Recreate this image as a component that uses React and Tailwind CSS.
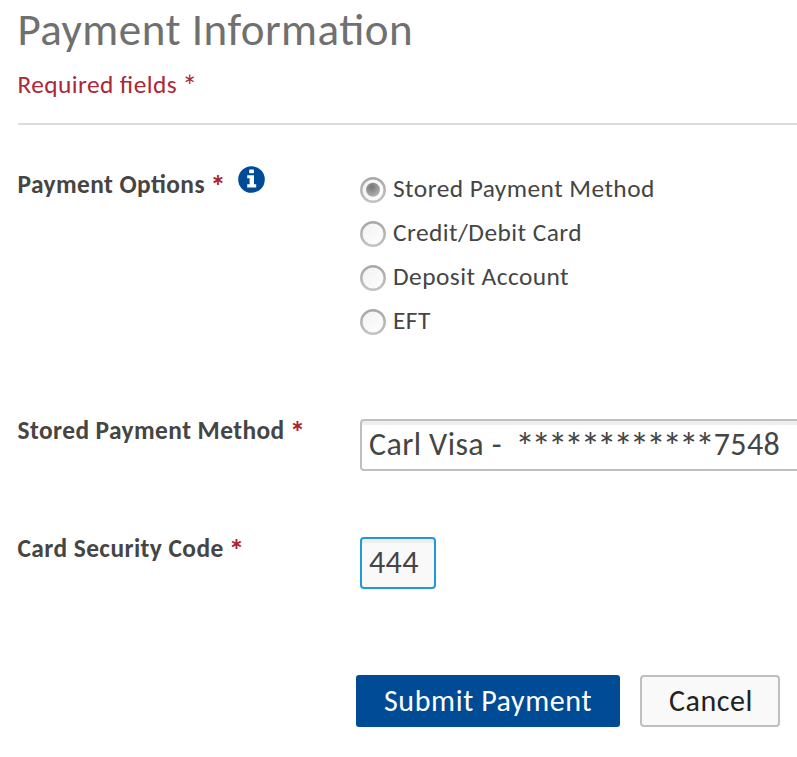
import { useState } from "react";

const options = [
  { id: "stored", label: "Stored Payment Method" },
  { id: "card", label: "Credit/Debit Card" },
  { id: "deposit", label: "Deposit Account" },
  { id: "eft", label: "EFT" },
];

const InfoIcon = () => (
  <svg className="w-[27px] h-[27px]" viewBox="0 0 27 27">
    <circle cx="13.5" cy="13.5" r="13.3" fill="#004b96" />
    <rect x="11.2" y="3.4" width="4.8" height="3.8" rx="0.8" fill="#fff" />
    <path d="M9.2 9.2h6.8v9h2.2v3.2H9.2v-3.2h2.4v-6H9.2z" fill="#fff" />
  </svg>
);

const RadioIcon = ({ checked }) => (
  <svg className="w-[26px] h-[26px]" viewBox="0 0 26 26">
    <defs>
      <linearGradient id="face" x1="0" y1="0" x2="1" y2="1">
        <stop offset="0" stopColor="#f1f1f1" />
        <stop offset="1" stopColor="#fff" />
      </linearGradient>
      <linearGradient id="ring" x1="0" y1="0" x2="0" y2="1">
        <stop offset="0" stopColor="#a8a8a8" />
        <stop offset="1" stopColor="#c2c2c2" />
      </linearGradient>
      <radialGradient id="dot" cx="0.4" cy="0.3" r="0.75">
        <stop offset="0" stopColor="#767676" />
        <stop offset="1" stopColor="#b4b4b4" />
      </radialGradient>
    </defs>
    <circle cx="13" cy="13" r="11.7" fill="url(#face)" stroke="url(#ring)" strokeWidth="2.5" />
    {checked && <circle cx="13" cy="12.7" r="7" fill="url(#dot)" />}
  </svg>
);

const FieldLabel = ({ children }) => (
  <span className="block -ml-[0.5px] text-[25.4px] leading-[32px] font-bold whitespace-nowrap tracking-[0.43px]">
    {children}{" "}
    <span className="inline-block w-[13px] -ml-px text-[31px] leading-[0px] align-[-3px] text-[#ad1f30]">*</span>
  </span>
);

const App = () => {
  const [selected, setSelected] = useState("stored");
  const [code, setCode] = useState("444");

  return (
    <div className="w-[797px] h-[757px] overflow-hidden bg-white pl-[18px] font-['Carlito','Lato',sans-serif] [font-feature-settings:'liga'] text-[#454545]">
      <h1 className="-ml-[0.5px] pt-[6px] text-[45px] leading-[48px] text-[#707070] whitespace-nowrap tracking-[0.5px]">
        Payment Information
      </h1>
      <p className="-ml-[0.5px] mt-4 text-[25.4px] leading-[30px] text-[#ad2737] whitespace-nowrap tracking-[0.4px]">
        Required fields{" "}
        <span className="inline-block -ml-px text-[30px] leading-[0px] align-[-4px]">*</span>
      </p>
      <hr className="mt-[23px] border-0 h-[2px] bg-[#dcdcdc]" />

      <section className="flex h-[294px]">
        <div className="w-[342px] pt-11 flex items-start">
          <FieldLabel>Payment Options</FieldLabel>
          <span className="-mt-[3px] ml-[14.5px]">
            <InfoIcon />
          </span>
        </div>
        <div className="pt-12 flex flex-col gap-[14px]">
          {options.map((option) => (
            <label key={option.id} className="flex items-center gap-[7px] h-[30px]">
              <input
                type="radio"
                name="payment"
                className="sr-only"
                checked={selected === option.id}
                onChange={() => setSelected(option.id)}
              />
              <span className="mt-[3px]">
                <RadioIcon checked={selected === option.id} />
              </span>
              <span className="mt-[2px] text-[25.4px] leading-[30px] whitespace-nowrap tracking-[0.45px]">
                {option.label}
              </span>
            </label>
          ))}
        </div>
      </section>

      <section className="flex h-[118px]">
        <div className="w-[342px] shrink-0 -mt-1">
          <FieldLabel>Stored Payment Method</FieldLabel>
        </div>
        <div className="w-[460px] shrink-0 h-[52px] rounded-[4px] border-2 border-[#bfbfbf] bg-white shadow-[inset_0_4px_0_#eeeeee] pl-[7px] whitespace-pre text-[32px] leading-[48px] tracking-[0.4px]">
          {"Carl Visa -  "}
          <span className="-ml-[2px] mr-[2px] text-[39px] leading-[0px] align-[-5px] tracking-[-3.05px]">************</span>
          7548
        </div>
      </section>

      <section className="flex h-[138px]">
        <div className="w-[342px] shrink-0 -mt-1">
          <FieldLabel>Card Security Code</FieldLabel>
        </div>
        <input
          value={code}
          onChange={(e) => setCode(e.target.value)}
          className="w-[76px] h-[52px] rounded-[4px] border-2 border-[#1e9bd7] bg-[#f9f9f9] shadow-[inset_0_4px_0_#eeeeee] pl-[7px] pb-[2px] text-[32px] leading-[48px] tracking-[0.4px] outline-none"
        />
      </section>

      <div className="flex gap-5 ml-[338px]">
        <button className="w-[264px] h-[52px] pb-[2px] rounded-[3px] bg-[#004b96] text-white text-[30px] whitespace-nowrap tracking-[0.6px]">
          Submit Payment
        </button>
        <button className="w-[140px] h-[52px] pb-[2px] rounded-[4px] border-2 border-[#bfbfbf] bg-[#f9f9f9] text-[#222] text-[30px] tracking-[0.6px] pl-[2px]">
          Cancel
        </button>
      </div>
    </div>
  );
};

export default App;
